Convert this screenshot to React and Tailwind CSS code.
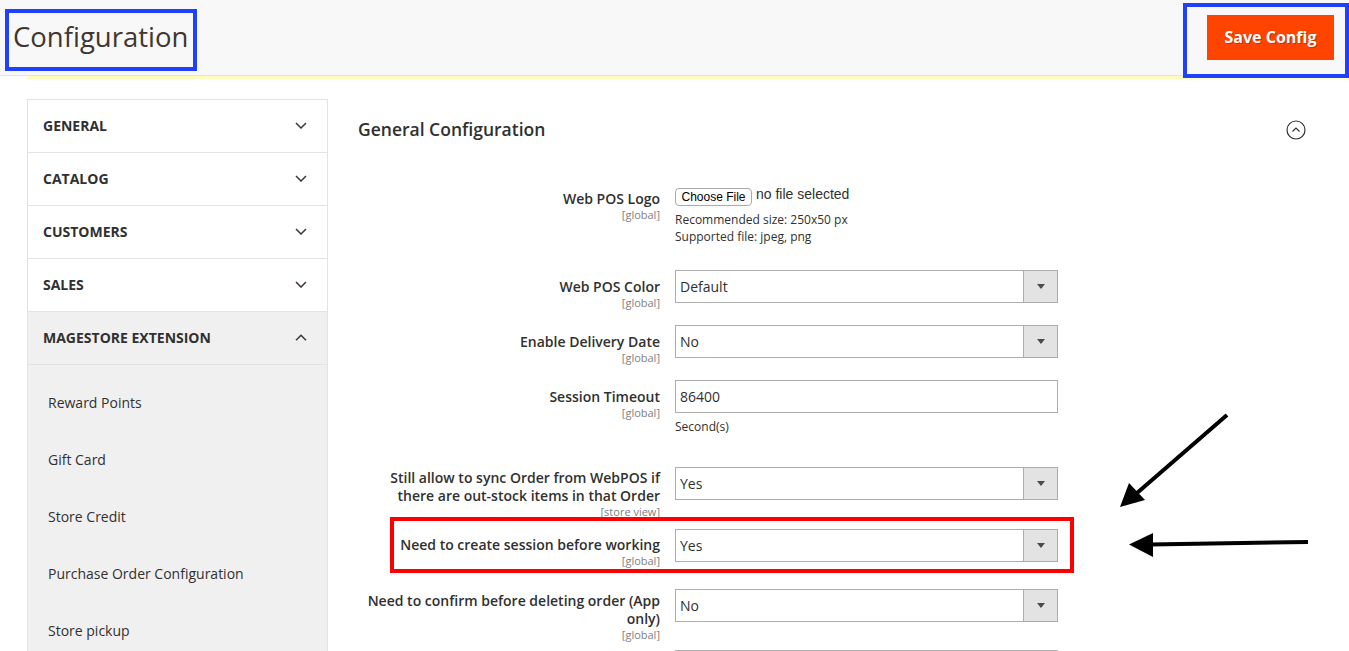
const Chevron = ({ up }) => (
  <svg width="12" height="7" viewBox="0 0 12 7" fill="none">
    <path
      d={up ? "M1 6.2 6 1.2 11 6.2" : "M1 1 6 6 11 1"}
      stroke="#41362f"
      strokeWidth="1.5"
    />
  </svg>
);

const SelectBox = ({ value }) => (
  <div className="flex h-[33px] w-[383px] border border-[#adadad] bg-white">
    <div className="flex flex-1 items-center pl-[4px] text-[14px] text-[#303030]">{value}</div>
    <div className="flex w-[34px] items-center justify-center border-l border-[#adadad] bg-[#e3e3e3]">
      <svg width="8" height="5" viewBox="0 0 8 5">
        <path d="M0 0h8L4 5z" fill="#514943" />
      </svg>
    </div>
  </div>
);

const Row = ({ label, scope, labelClass, rowClass, children }) => (
  <div className={`flex ${rowClass}`}>
    <div className={`w-[302px] text-right ${labelClass}`}>
      <div className="text-[14px] font-semibold leading-[18px] text-[#303030]">{label}</div>
      <div className="text-[11px] leading-[13px] text-[#808080]">{scope}</div>
    </div>
    <div className="ml-[15px]">{children}</div>
  </div>
);

const sections = ["GENERAL", "CATALOG", "CUSTOMERS", "SALES"];
const subItems = ["Reward Points", "Gift Card", "Store Credit", "Purchase Order Configuration", "Store pickup"];

export default function App() {
  return (
    <div className="relative h-[651px] w-full overflow-hidden bg-white font-['Open_Sans',sans-serif]">
      {/* page header */}
      <div className="flex h-[76px] items-start justify-between border-b border-[#e3e3e3] bg-[#f8f8f8] pr-[15px]">
        <h1 className="pl-[13px] pt-[19px] text-[27.5px] leading-[36px] text-[#41362f]">Configuration</h1>
        <button className="mt-[15px] h-[45px] w-[127px] bg-[#ff4400] pb-[1px] text-[16px] font-bold text-white [text-shadow:1px_1px_0_rgba(0,0,0,0.25)]">
          Save Config
        </button>
      </div>
      <div className="ml-[27px] h-[3px] bg-[#fffbbb]" />

      <div className="mt-[20px] flex pl-[27px]">
        {/* sidebar */}
        <div className="w-[301px] shrink-0 border-x border-t border-[#e3e3e3]">
          {sections.map((s) => (
            <div key={s} className="flex h-[53px] items-center justify-between border-b border-[#e3e3e3] pb-[2px] pl-[15px] pr-[20px]">
              <span className="text-[14px] font-bold text-[#303030]">{s}</span>
              <Chevron />
            </div>
          ))}
          <div className="flex h-[53px] items-center justify-between border-b border-[#e3e3e3] bg-[#f0f0f0] pb-[2px] pl-[15px] pr-[20px]">
            <span className="text-[14px] font-bold text-[#303030]">MAGESTORE EXTENSION</span>
            <Chevron up />
          </div>
          <div className="bg-[#f0f0f0] pt-[9px]">
            {subItems.map((s) => (
              <div key={s} className="flex h-[57px] items-center pl-[20px] text-[14px] text-[#303030]">
                {s}
              </div>
            ))}
          </div>
        </div>

        {/* main */}
        <div className="ml-[30px] flex-1 pr-[43px]">
          <div className="flex items-center justify-between pt-[18px]">
            <h2 className="text-[17.5px] font-semibold leading-[24px] text-[#303030]">General Configuration</h2>
            <svg width="20" height="20" viewBox="0 0 20 20" fill="none" className="mt-[2px]">
              <circle cx="10" cy="10" r="9" stroke="#303030" strokeWidth="1.2" />
              <path d="M6.5 11.5 10 8l3.5 3.5" stroke="#303030" strokeWidth="1.2" />
            </svg>
          </div>

          <div className="mt-[47px]">
            <Row label="Web POS Logo" scope="[global]" labelClass="pt-[2px]" rowClass="h-[82px]">
              <div className="flex items-start gap-[4px]">
                <div className="flex h-[18px] w-[77px] items-center justify-center rounded-[4px] border border-[#aaaaaa] bg-white font-['Liberation_Sans',sans-serif] text-[12px] text-black">
                  Choose File
                </div>
                <span className="-mt-[2px] font-['Liberation_Sans',sans-serif] text-[14px] leading-[16px] text-[#303030]">no file selected</span>
              </div>
              <div className="mt-[5px] text-[12px] leading-[17px] text-[#303030]">
                <div>Recommended size: 250x50 px</div>
                <div>Supported file: jpeg, png</div>
              </div>
            </Row>
            <Row label="Web POS Color" scope="[global]" labelClass="pt-[8px]" rowClass="h-[55px]">
              <SelectBox value="Default" />
            </Row>
            <Row label="Enable Delivery Date" scope="[global]" labelClass="pt-[8px]" rowClass="h-[55px]">
              <SelectBox value="No" />
            </Row>
            <Row label="Session Timeout" scope="[global]" labelClass="pt-[8px]" rowClass="h-[87px]">
              <div className="flex h-[33px] w-[383px] items-center border border-[#adadad] pl-[4px] text-[14px] text-[#303030]">
                86400
              </div>
              <div className="mt-[5px] text-[12px] text-[#303030]">Second(s)</div>
            </Row>
            <Row
              label={<>Still allow to sync Order from WebPOS if<br />there are out-stock items in that Order</>}
              scope="[store view]"
              labelClass="pt-[2px]"
              rowClass="h-[62px]"
            >
              <SelectBox value="Yes" />
            </Row>
            <Row label="Need to create session before working" scope="[global]" labelClass="pt-[7px]" rowClass="h-[60px]">
              <SelectBox value="Yes" />
            </Row>
            <Row
              label={<>Need to confirm before deleting order (App<br />only)</>}
              scope="[global]"
              labelClass="pt-[3px]"
              rowClass="h-[61px]"
            >
              <SelectBox value="No" />
            </Row>
            <Row label="" scope="" labelClass="" rowClass="h-[40px]">
              <SelectBox value="" />
            </Row>
          </div>
        </div>
      </div>

      {/* annotations */}
      <div className="absolute left-[5px] top-[9px] h-[62px] w-[192px] border-[4px] border-[#1f40ff]" />
      <div className="absolute left-[1183px] top-[3px] h-[75px] w-[166px] border-[4px] border-[#1f40ff]" />
      <div className="absolute left-[390px] top-[517px] h-[56px] w-[684px] border-[4px] border-[#ff0000]" />
      <svg className="absolute left-[1100px] top-[400px]" width="249" height="180" viewBox="0 0 249 180">
        <path d="M127 15 37 93" stroke="#000" strokeWidth="4" />
        <path d="M20 107 29 83 45 100z" fill="#000" />
        <path d="M208 142 50 144.5" stroke="#000" strokeWidth="4" />
        <path d="M29 144.5 53 133 53 157z" fill="#000" />
      </svg>
    </div>
  );
}
